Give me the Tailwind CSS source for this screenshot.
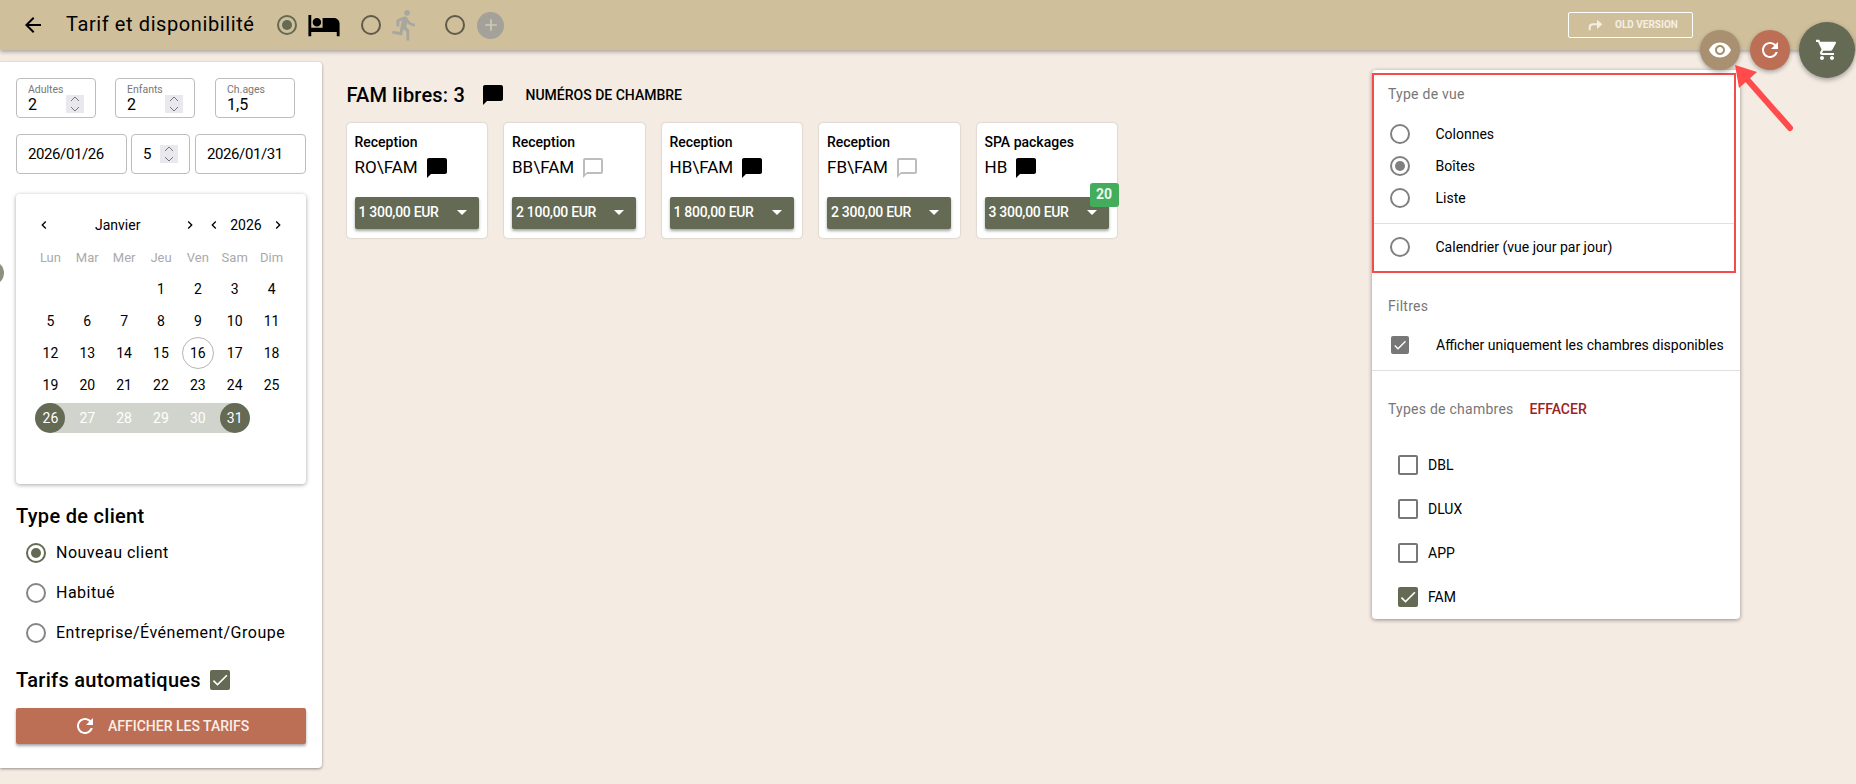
<!DOCTYPE html>
<html>
<head>
<title>Tarif et disponibilité</title>
<script src="https://cdn.jsdelivr.net/npm/@tailwindcss/browser@4"></script>
</head>
<body class="relative h-[784px] w-[1856px] overflow-hidden bg-[#f4ebe3] font-[Roboto,sans-serif] text-black">

  <!-- Top bar -->
  <header class="relative z-10 flex h-[50px] items-center bg-[#cfbf9b] shadow-[0_2px_4px_rgba(0,0,0,.3)]">
    <svg class="ml-[21px] h-[24px] w-[24px]" viewBox="0 0 24 24"><path d="M20 11H7.83l5.59-5.59L12 4l-8 8 8 8 1.41-1.41L7.83 13H20v-2z"/></svg>
    <h1 class="ml-[21px] text-[20px] leading-[24px] tracking-[.6px] -mt-[2px] w-[192px] whitespace-nowrap">Tarif et disponibilité</h1>
    <span class="ml-[18.5px] flex h-[20px] w-[20px] items-center justify-center rounded-full border-2 border-[#646a54]"><span class="h-[10px] w-[10px] rounded-full bg-[#646a54]"></span></span>
    <svg class="ml-[10px] h-[34px] w-[34px]" viewBox="0 0 24 24"><path d="M7 13c1.66 0 3-1.34 3-3S8.66 7 7 7s-3 1.34-3 3 1.34 3 3 3zm12-6h-8v7H3V5H1v15h2v-3h18v3h2v-9c0-2.21-1.79-4-4-4z"/></svg>
    <span class="ml-[20.5px] h-[20px] w-[20px] rounded-full border-2 border-[#5f5a4a]"></span>
    <svg class="ml-[7px] h-[34px] w-[34px]" viewBox="0 0 24 24"><path fill="#a8a79f" d="M13.49 5.48c1.1 0 2-.9 2-2s-.9-2-2-2-2 .9-2 2 .9 2 2 2zm-3.6 13.9l1-4.4 2.1 2v6h2v-7.5l-2.1-2 .6-3c1.3 1.5 3.3 2.5 5.5 2.5v-2c-1.9 0-3.5-1-4.3-2.4l-1-1.6c-.4-.6-1-1-1.7-1-.3 0-.5.1-.8.1l-5.2 2.2v4.7h2v-3.4l1.8-.7-1.6 8.1-4.9-1-.4 2 7 1.4z"/></svg>
    <span class="ml-[23px] h-[20px] w-[20px] rounded-full border-2 border-[#5f5a4a]"></span>
    <span class="ml-[12px] flex h-[27px] w-[27px] items-center justify-center rounded-full bg-[#a3a19a]">
      <svg class="h-[20px] w-[20px]" viewBox="0 0 24 24"><path fill="#cfc9b4" d="M19 13h-6v6h-2v-6H5v-2h6V5h2v6h6v2z"/></svg>
    </span>
    <button class="ml-auto mr-[163px] -mt-[1px] flex h-[26px] w-[125px] items-center rounded-[2px] border border-white pl-[18px] text-[10px] font-bold text-[#f4efe4]">
      <svg class="mr-[12px] h-[16px] w-[16px]" viewBox="0 0 24 24"><path fill="none" stroke="#f4efe4" stroke-width="3" d="M4 20v-4c0-3 2-5 5-5h10"/><path fill="#f4efe4" d="M15 4l8 7-8 7z"/></svg>
      OLD VERSION
    </button>
  </header>

  <div class="flex items-start">
    <!-- Left panel -->
    <aside class="mt-[12px] h-[706px] w-[322px] shrink-0 rounded-r-[4px] bg-white px-[16px] pt-[16px] shadow-[0_1px_3px_rgba(0,0,0,.4)]">
      <div class="flex">
        <div class="relative h-[40px] w-[80px] rounded-[4px] border border-[#bdbdbd] pl-[11px] pt-[5px]">
          <div class="text-[10.5px] leading-[12px] text-[#777]">Adultes</div>
          <div class="text-[16px] leading-[18px]">2</div>
          <span class="absolute right-[11px] top-[16px] flex h-[18px] w-[18px] flex-col items-center bg-[#e8e8ee]">
            <svg class="h-[9px] w-[12px]" viewBox="0 0 12 9"><path fill="none" stroke="#777" d="M2 6l4-4 4 4"/></svg>
            <svg class="h-[9px] w-[12px]" viewBox="0 0 12 9"><path fill="none" stroke="#777" d="M2 3l4 4 4-4"/></svg>
          </span>
        </div>
        <div class="relative ml-[19px] h-[40px] w-[80px] rounded-[4px] border border-[#bdbdbd] pl-[11px] pt-[5px]">
          <div class="text-[10.5px] leading-[12px] text-[#777]">Enfants</div>
          <div class="text-[16px] leading-[18px]">2</div>
          <span class="absolute right-[11px] top-[16px] flex h-[18px] w-[18px] flex-col items-center bg-[#e8e8ee]">
            <svg class="h-[9px] w-[12px]" viewBox="0 0 12 9"><path fill="none" stroke="#777" d="M2 6l4-4 4 4"/></svg>
            <svg class="h-[9px] w-[12px]" viewBox="0 0 12 9"><path fill="none" stroke="#777" d="M2 3l4 4 4-4"/></svg>
          </span>
        </div>
        <div class="ml-[20px] h-[40px] w-[80px] rounded-[4px] border border-[#bdbdbd] pl-[11px] pt-[5px]">
          <div class="text-[10.5px] leading-[12px] text-[#777]">Ch.ages</div>
          <div class="text-[16px] leading-[18px]">1,5</div>
        </div>
      </div>

      <div class="mt-[16px] flex text-[15px] tracking-[-.4px]">
        <div class="flex h-[40px] w-[111px] items-center rounded-[4px] border border-[#bdbdbd] pl-[11px]">2026/01/26</div>
        <div class="relative ml-[4px] flex h-[40px] w-[59px] items-center rounded-[4px] border border-[#bdbdbd] pl-[11px]">
          5
          <span class="absolute right-[11px] top-[10px] flex h-[18px] w-[18px] flex-col items-center bg-[#e8e8ee]">
            <svg class="h-[9px] w-[12px]" viewBox="0 0 12 9"><path fill="none" stroke="#777" d="M2 6l4-4 4 4"/></svg>
            <svg class="h-[9px] w-[12px]" viewBox="0 0 12 9"><path fill="none" stroke="#777" d="M2 3l4 4 4-4"/></svg>
          </span>
        </div>
        <div class="ml-[5px] flex h-[40px] w-[111px] items-center rounded-[4px] border border-[#bdbdbd] pl-[11px]">2026/01/31</div>
      </div>

      <!-- Calendar -->
      <div class="mt-[20px] h-[290px] w-[290px] rounded-[4px] bg-white pt-[21px] shadow-[0_1px_4px_rgba(0,0,0,.35)]">
        <div class="relative flex h-[20px] items-center text-[14px]">
          <svg class="absolute left-[20px] h-[16px] w-[16px]" viewBox="0 0 24 24"><path d="M15.41 7.41L14 6l-6 6 6 6 1.41-1.41L10.83 12z"/></svg>
          <span class="absolute left-[79px] w-[45px] text-center">Janvier</span>
          <svg class="absolute left-[166px] h-[16px] w-[16px]" viewBox="0 0 24 24"><path d="M10 6L8.59 7.41 13.17 12l-4.58 4.59L10 18l6-6z"/></svg>
          <svg class="absolute left-[190px] h-[16px] w-[16px]" viewBox="0 0 24 24"><path d="M15.41 7.41L14 6l-6 6 6 6 1.41-1.41L10.83 12z"/></svg>
          <span class="absolute left-[214px] w-[32px] text-center">2026</span>
          <svg class="absolute left-[254px] h-[16px] w-[16px]" viewBox="0 0 24 24"><path d="M10 6L8.59 7.41 13.17 12l-4.58 4.59L10 18l6-6z"/></svg>
        </div>
        <div class="ml-[16px] mt-[13px] grid w-[258px] grid-cols-7 text-center text-[13px] leading-[20px] text-[#aaa]">
          <span>Lun</span><span>Mar</span><span>Mer</span><span>Jeu</span><span>Ven</span><span>Sam</span><span>Dim</span>
        </div>
        <div class="ml-[16px] mt-[5px] grid w-[258px] grid-cols-7 text-center text-[14px] leading-[32px]">
          <span></span><span></span><span></span><span>1</span><span>2</span><span>3</span><span>4</span>
          <span>5</span><span>6</span><span>7</span><span>8</span><span>9</span><span>10</span><span>11</span>
          <span>12</span><span>13</span><span>14</span><span>15</span>
          <span class="mx-auto h-[32px] w-[32px] rounded-full border border-[#b5b5b5] leading-[30px]">16</span>
          <span>17</span><span>18</span>
          <span>19</span><span>20</span><span>21</span><span>22</span><span>23</span><span>24</span><span>25</span>
        </div>
        <div class="ml-[16px] mt-[2px] grid h-[30px] w-[258px] grid-cols-7 text-center text-[14px] leading-[30px] text-white">
          <span class="bg-[linear-gradient(90deg,transparent_50%,#d1d4cc_50%)]"><span class="mx-auto block h-[30px] w-[30px] rounded-full bg-[#646a54]">26</span></span>
          <span class="bg-[#d1d4cc]">27</span><span class="bg-[#d1d4cc]">28</span><span class="bg-[#d1d4cc]">29</span><span class="bg-[#d1d4cc]">30</span>
          <span class="bg-[linear-gradient(90deg,#d1d4cc_50%,transparent_50%)]"><span class="mx-auto block h-[30px] w-[30px] rounded-full bg-[#646a54]">31</span></span>
        </div>
      </div>

      <h2 class="mt-[20px] text-[20px] font-medium leading-[24px] tracking-[.3px]">Type de client</h2>
      <div class="mt-[13px] flex h-[24px] items-center pl-[10px] text-[16px] tracking-[.5px]">
        <span class="flex h-[20px] w-[20px] items-center justify-center rounded-full border-2 border-[#646a54]"><span class="h-[10px] w-[10px] rounded-full bg-[#646a54]"></span></span>
        <span class="ml-[10px]">Nouveau client</span>
      </div>
      <div class="mt-[16px] flex h-[24px] items-center pl-[10px] text-[16px] tracking-[.5px]">
        <span class="h-[20px] w-[20px] rounded-full border-2 border-[#858585]"></span>
        <span class="ml-[10px]">Habitué</span>
      </div>
      <div class="mt-[16px] flex h-[24px] items-center pl-[10px] text-[16px] tracking-[.5px]">
        <span class="h-[20px] w-[20px] rounded-full border-2 border-[#858585]"></span>
        <span class="ml-[10px] whitespace-nowrap">Entreprise/Événement/Groupe</span>
      </div>
      <div class="mt-[23px] flex h-[24px] items-center text-[20px] font-medium tracking-[.3px]">
        Tarifs automatiques
        <span class="ml-[9px] flex h-[20px] w-[20px] items-center justify-center rounded-[2px] bg-[#646a54]">
          <svg class="h-[20px] w-[20px]" viewBox="0 0 24 24"><path fill="#fff" d="M9 16.17L4.83 12l-1.42 1.41L9 19 21 7l-1.41-1.41z"/></svg>
        </span>
      </div>
      <button class="mt-[16px] flex h-[36px] w-[290px] items-center rounded-[2px] bg-[#bd6f55] pl-[57px] text-[14px] font-medium text-[#fbeee8] shadow-[0_2px_3px_rgba(0,0,0,.35)]">
        <svg class="h-[24px] w-[24px]" viewBox="0 0 24 24"><path fill="#fff" d="M17.65 6.35C16.2 4.9 14.21 4 12 4c-4.42 0-7.99 3.58-7.99 8s3.57 8 7.99 8c3.73 0 6.84-2.55 7.73-6h-2.08c-.82 2.33-3.04 4-5.65 4-3.31 0-6-2.69-6-6s2.69-6 6-6c1.66 0 3.14.69 4.22 1.78L13 11h7V4l-2.35 2.35z"/></svg>
        <span class="ml-[11px]">AFFICHER LES TARIFS</span>
      </button>
    </aside>

    <!-- Room offers -->
    <main class="ml-[24.5px] pt-[33px]">
      <div class="flex h-[24px] items-center">
        <span class="w-[119px] whitespace-nowrap text-[20px] font-medium tracking-[.2px]">FAM libres: 3</span>
        <svg class="ml-[15px] h-[24px] w-[24px]" viewBox="0 0 24 24"><path d="M20 2H4c-1.1 0-2 .9-2 2v18l4-4h14c1.1 0 2-.9 2-2V4c0-1.1-.9-2-2-2z"/></svg>
        <span class="ml-[21px] text-[14px] font-medium">NUMÉROS DE CHAMBRE</span>
      </div>
      <div class="mt-[15.5px] flex gap-[17px]">
        <div class="h-[115px] w-[140.5px] rounded-[4px] bg-white px-[8px] pt-[9.5px] shadow-[0_0_2px_rgba(0,0,0,.25)]">
          <div class="text-[14px] font-medium leading-[20px]">Reception</div>
          <div class="mt-[4px] flex h-[24px] items-center text-[17px]">RO\FAM<svg class="ml-[7px] h-[24px] w-[24px]" viewBox="0 0 24 24"><path d="M20 2H4c-1.1 0-2 .9-2 2v18l4-4h14c1.1 0 2-.9 2-2V4c0-1.1-.9-2-2-2z"/></svg></div>
          <button class="mt-[16.5px] flex h-[32px] w-[124px] items-center rounded-[2px] bg-[#646a54] pl-[4px] text-[14px] font-medium tracking-[-.3px] text-white shadow-[0_2px_3px_rgba(0,0,0,.35)]">1 300,00 EUR<span class="ml-auto mr-[12px] h-0 w-0 border-x-[5px] border-t-[5px] border-x-transparent border-t-white"></span></button>
        </div>
        <div class="h-[115px] w-[140.5px] rounded-[4px] bg-white px-[8px] pt-[9.5px] shadow-[0_0_2px_rgba(0,0,0,.25)]">
          <div class="text-[14px] font-medium leading-[20px]">Reception</div>
          <div class="mt-[4px] flex h-[24px] items-center text-[17px]">BB\FAM<svg class="ml-[7px] h-[24px] w-[24px]" viewBox="0 0 24 24"><path fill="#bdbdbd" d="M20 2H4c-1.1 0-2 .9-2 2v18l4-4h14c1.1 0 2-.9 2-2V4c0-1.1-.9-2-2-2zm0 14H6l-2 2V4h16v12z"/></svg></div>
          <button class="mt-[16.5px] flex h-[32px] w-[124px] items-center rounded-[2px] bg-[#646a54] pl-[4px] text-[14px] font-medium tracking-[-.3px] text-white shadow-[0_2px_3px_rgba(0,0,0,.35)]">2 100,00 EUR<span class="ml-auto mr-[12px] h-0 w-0 border-x-[5px] border-t-[5px] border-x-transparent border-t-white"></span></button>
        </div>
        <div class="h-[115px] w-[140.5px] rounded-[4px] bg-white px-[8px] pt-[9.5px] shadow-[0_0_2px_rgba(0,0,0,.25)]">
          <div class="text-[14px] font-medium leading-[20px]">Reception</div>
          <div class="mt-[4px] flex h-[24px] items-center text-[17px]">HB\FAM<svg class="ml-[7px] h-[24px] w-[24px]" viewBox="0 0 24 24"><path d="M20 2H4c-1.1 0-2 .9-2 2v18l4-4h14c1.1 0 2-.9 2-2V4c0-1.1-.9-2-2-2z"/></svg></div>
          <button class="mt-[16.5px] flex h-[32px] w-[124px] items-center rounded-[2px] bg-[#646a54] pl-[4px] text-[14px] font-medium tracking-[-.3px] text-white shadow-[0_2px_3px_rgba(0,0,0,.35)]">1 800,00 EUR<span class="ml-auto mr-[12px] h-0 w-0 border-x-[5px] border-t-[5px] border-x-transparent border-t-white"></span></button>
        </div>
        <div class="h-[115px] w-[140.5px] rounded-[4px] bg-white px-[8px] pt-[9.5px] shadow-[0_0_2px_rgba(0,0,0,.25)]">
          <div class="text-[14px] font-medium leading-[20px]">Reception</div>
          <div class="mt-[4px] flex h-[24px] items-center text-[17px]">FB\FAM<svg class="ml-[7px] h-[24px] w-[24px]" viewBox="0 0 24 24"><path fill="#bdbdbd" d="M20 2H4c-1.1 0-2 .9-2 2v18l4-4h14c1.1 0 2-.9 2-2V4c0-1.1-.9-2-2-2zm0 14H6l-2 2V4h16v12z"/></svg></div>
          <button class="mt-[16.5px] flex h-[32px] w-[124px] items-center rounded-[2px] bg-[#646a54] pl-[4px] text-[14px] font-medium tracking-[-.3px] text-white shadow-[0_2px_3px_rgba(0,0,0,.35)]">2 300,00 EUR<span class="ml-auto mr-[12px] h-0 w-0 border-x-[5px] border-t-[5px] border-x-transparent border-t-white"></span></button>
        </div>
        <div class="relative h-[115px] w-[140.5px] rounded-[4px] bg-white px-[8px] pt-[9.5px] shadow-[0_0_2px_rgba(0,0,0,.25)]">
          <div class="text-[14px] font-medium leading-[20px]">SPA packages</div>
          <div class="mt-[4px] flex h-[24px] items-center text-[17px]">HB<svg class="ml-[7px] h-[24px] w-[24px]" viewBox="0 0 24 24"><path d="M20 2H4c-1.1 0-2 .9-2 2v18l4-4h14c1.1 0 2-.9 2-2V4c0-1.1-.9-2-2-2z"/></svg></div>
          <button class="mt-[16.5px] flex h-[32px] w-[124px] items-center rounded-[2px] bg-[#646a54] pl-[4px] text-[14px] font-medium tracking-[-.3px] text-white shadow-[0_2px_3px_rgba(0,0,0,.35)]">3 300,00 EUR<span class="ml-auto mr-[12px] h-0 w-0 border-x-[5px] border-t-[5px] border-x-transparent border-t-white"></span></button>
          <span class="absolute left-[113px] top-[60px] flex h-[24px] w-[29px] items-center justify-center rounded-[3px] bg-[#43ad5b] text-[14px] font-bold text-[#eef7ee]">20</span>
        </div>
      </div>
    </main>
  </div>

  <!-- half hidden handle on the left edge -->
  <span class="absolute -left-[20px] top-[261px] h-[24px] w-[24px] rounded-full bg-[#8e917f]"></span>

  <!-- Round action buttons -->
  <span class="absolute left-[1700px] top-[30px] z-20 flex h-[40px] w-[40px] items-center justify-center rounded-full bg-[#a89070] shadow-[0_2px_4px_rgba(0,0,0,.3)]">
    <svg class="h-[24px] w-[24px]" viewBox="0 0 24 24"><path fill="#fff" d="M12 4.5C7 4.5 2.73 7.61 1 12c1.73 4.39 6 7.5 11 7.5s9.27-3.11 11-7.5c-1.73-4.39-6-7.5-11-7.5zM12 17c-2.76 0-5-2.24-5-5s2.24-5 5-5 5 2.24 5 5-2.24 5-5 5zm0-8c-1.66 0-3 1.34-3 3s1.34 3 3 3 3-1.34 3-3-1.34-3-3-3z"/></svg>
  </span>
  <span class="absolute left-[1750px] top-[30px] z-20 flex h-[40px] w-[40px] items-center justify-center rounded-full bg-[#bd6f55] shadow-[0_2px_4px_rgba(0,0,0,.3)]">
    <svg class="h-[24px] w-[24px]" viewBox="0 0 24 24"><path fill="#fff" d="M17.65 6.35C16.2 4.9 14.21 4 12 4c-4.42 0-7.99 3.58-7.99 8s3.57 8 7.99 8c3.73 0 6.84-2.55 7.73-6h-2.08c-.82 2.33-3.04 4-5.65 4-3.31 0-6-2.69-6-6s2.69-6 6-6c1.66 0 3.14.69 4.22 1.78L13 11h7V4l-2.35 2.35z"/></svg>
  </span>
  <span class="absolute left-[1799px] top-[22px] z-20 flex h-[56px] w-[56px] items-center justify-center rounded-full bg-[#646a54] shadow-[0_2px_5px_rgba(0,0,0,.35)]">
    <svg class="h-[24px] w-[24px]" viewBox="0 0 24 24"><path fill="#fff" d="M7 18c-1.1 0-1.99.9-1.99 2S5.9 22 7 22s2-.9 2-2-.9-2-2-2zM1 2v2h2l3.6 7.59-1.35 2.45c-.16.28-.25.61-.25.96 0 1.1.9 2 2 2h12v-2H7.42c-.14 0-.25-.11-.25-.25l.03-.12.9-1.83h7.45c.75 0 1.41-.41 1.75-1.03l3.58-6.49c.08-.14.12-.31.12-.48 0-.55-.45-1-1-1H5.21l-.94-2H1zm16 16c-1.1 0-1.99.9-1.99 2s.89 2 1.99 2 2-.9 2-2-.9-2-2-2z"/></svg>
  </span>

  <!-- View menu -->
  <div class="absolute left-[1372px] top-[70px] z-10 h-[549px] w-[368px] rounded-[4px] bg-white pt-[3px] text-[14px] shadow-[0_1px_4px_rgba(0,0,0,.4)]">
    <div class="h-[200px] w-[364px] border-2 border-[#f44b4b]">
      <div class="pl-[14px] pt-[9px] leading-[20px] tracking-[.25px] text-[#777]">Type de vue</div>
      <div class="mt-[18px] flex h-[24px] items-center pl-[16px]"><span class="h-[20px] w-[20px] rounded-full border-2 border-[#808080]"></span><span class="ml-[25.5px]">Colonnes</span></div>
      <div class="mt-[8px] flex h-[24px] items-center pl-[16px]"><span class="flex h-[20px] w-[20px] items-center justify-center rounded-full border-2 border-[#808080]"><span class="h-[10px] w-[10px] rounded-full bg-[#808080]"></span></span><span class="ml-[25.5px]">Boîtes</span></div>
      <div class="mt-[8px] flex h-[24px] items-center pl-[16px]"><span class="h-[20px] w-[20px] rounded-full border-2 border-[#808080]"></span><span class="ml-[25.5px]">Liste</span></div>
      <div class="mt-[12.5px] border-t border-[#e0e0e0]"></div>
      <div class="mt-[11.5px] flex h-[24px] items-center pl-[16px]"><span class="h-[20px] w-[20px] rounded-full border-2 border-[#808080]"></span><span class="ml-[25.5px]">Calendrier (vue jour par jour)</span></div>
    </div>
    <div class="mt-[23px] pl-[16px] leading-[20px] tracking-[.25px] text-[#777]">Filtres</div>
    <div class="mt-[19px] flex h-[20px] items-center pl-[19px]">
      <span class="flex h-[18px] w-[18px] items-center justify-center rounded-[2px] bg-[#777]">
        <svg class="h-[16px] w-[16px]" viewBox="0 0 24 24"><path fill="#fff" d="M9 16.17L4.83 12l-1.42 1.41L9 19 21 7l-1.41-1.41z"/></svg>
      </span>
      <span class="ml-[27px] whitespace-nowrap">Afficher uniquement les chambres disponibles</span>
    </div>
    <div class="mt-[15px] border-t border-[#e0e0e0]"></div>
    <div class="mt-[28px] flex h-[20px] items-center pl-[16px]">
      <span class="tracking-[.25px] text-[#777]">Types de chambres</span>
      <span class="ml-[16px] font-medium text-[#9b2226]">EFFACER</span>
    </div>
    <div class="mt-[36px] flex h-[20px] items-center pl-[26px]"><span class="h-[20px] w-[20px] rounded-[2px] border-2 border-[#777]"></span><span class="ml-[10px]">DBL</span></div>
    <div class="mt-[24px] flex h-[20px] items-center pl-[26px]"><span class="h-[20px] w-[20px] rounded-[2px] border-2 border-[#777]"></span><span class="ml-[10px]">DLUX</span></div>
    <div class="mt-[24px] flex h-[20px] items-center pl-[26px]"><span class="h-[20px] w-[20px] rounded-[2px] border-2 border-[#777]"></span><span class="ml-[10px]">APP</span></div>
    <div class="mt-[24px] flex h-[20px] items-center pl-[26px]">
      <span class="flex h-[20px] w-[20px] items-center justify-center rounded-[2px] bg-[#646a54]">
        <svg class="h-[20px] w-[20px]" viewBox="0 0 24 24"><path fill="#fff" d="M9 16.17L4.83 12l-1.42 1.41L9 19 21 7l-1.41-1.41z"/></svg>
      </span>
      <span class="ml-[10px]">FAM</span>
    </div>
  </div>

  <!-- Red annotation arrow -->
  <svg class="absolute left-[1725px] top-[55px] z-30 h-[85px] w-[75px]" viewBox="0 0 75 85">
    <path fill="none" stroke="#ff4b4b" stroke-width="6" stroke-linecap="round" d="M65 73L20 22"/>
    <path fill="#ff4b4b" d="M10 10L32 17L14 33z"/>
  </svg>
</body>
</html>
